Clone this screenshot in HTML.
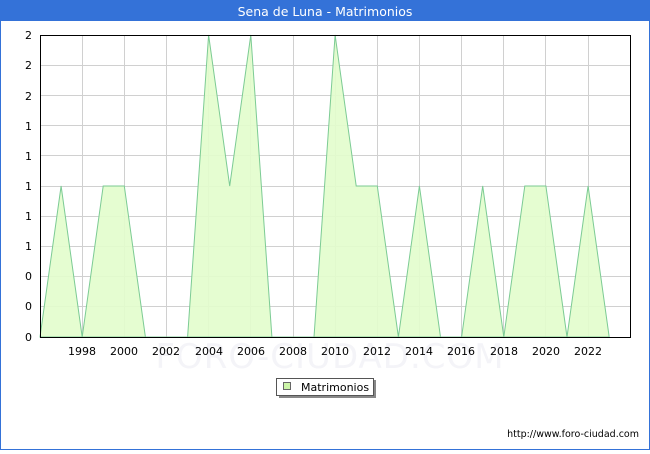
<!DOCTYPE html>
<html><head><style>
body{margin:0;width:650px;height:450px;overflow:hidden;background:#fff;font-family:"DejaVu Sans","Liberation Sans",sans-serif;}
</style></head><body>
<svg width="650" height="450" viewBox="0 0 650 450" xmlns="http://www.w3.org/2000/svg" font-family="DejaVu Sans, Liberation Sans, sans-serif">
<rect x="0" y="0" width="650" height="450" fill="#3472d8"/>
<rect x="1" y="21" width="648" height="428" fill="#fff"/>
<text x="325" y="16" fill="#fff" font-size="12.5" text-anchor="middle">Sena de Luna - Matrimonios</text>
<text x="330" y="368" fill="#f4f4f8" font-size="34" text-anchor="middle" letter-spacing="1">FORO-CIUDAD.COM</text>
<g stroke="#d0d0d0" stroke-width="1">
<line x1="40" y1="65.5" x2="630" y2="65.5"/><line x1="40" y1="95.5" x2="630" y2="95.5"/><line x1="40" y1="125.5" x2="630" y2="125.5"/><line x1="40" y1="155.5" x2="630" y2="155.5"/><line x1="40" y1="186.5" x2="630" y2="186.5"/><line x1="40" y1="216.5" x2="630" y2="216.5"/><line x1="40" y1="246.5" x2="630" y2="246.5"/><line x1="40" y1="276.5" x2="630" y2="276.5"/><line x1="40" y1="306.5" x2="630" y2="306.5"/>
<line x1="82.5" y1="35" x2="82.5" y2="337"/><line x1="124.5" y1="35" x2="124.5" y2="337"/><line x1="166.5" y1="35" x2="166.5" y2="337"/><line x1="208.5" y1="35" x2="208.5" y2="337"/><line x1="250.5" y1="35" x2="250.5" y2="337"/><line x1="293.5" y1="35" x2="293.5" y2="337"/><line x1="335.5" y1="35" x2="335.5" y2="337"/><line x1="377.5" y1="35" x2="377.5" y2="337"/><line x1="419.5" y1="35" x2="419.5" y2="337"/><line x1="461.5" y1="35" x2="461.5" y2="337"/><line x1="503.5" y1="35" x2="503.5" y2="337"/><line x1="545.5" y1="35" x2="545.5" y2="337"/><line x1="588.5" y1="35" x2="588.5" y2="337"/>
</g>
<polygon fill="#e2fdcc" fill-opacity="0.9" stroke="#7ccb94" stroke-width="1" points="40,337 61.1,186 82.2,337 103.2,186 124.3,186 145.4,337 166.5,337 187.6,337 208.6,35 229.7,186 250.8,35 271.9,337 293,337 314,337 335.1,35 356.2,186 377.3,186 398.4,337 419.4,186 440.5,337 461.6,337 482.7,186 503.8,337 524.8,186 545.9,186 567,337 588.1,186 609.2,337"/>
<rect x="40.5" y="35.5" width="590" height="302" fill="none" stroke="#000" stroke-width="1"/>
<g font-size="11" fill="#000" text-anchor="end">
<text x="32" y="39">2</text><text x="32" y="69">2</text><text x="32" y="100">2</text><text x="32" y="130">1</text><text x="32" y="160">1</text><text x="32" y="190">1</text><text x="32" y="220">1</text><text x="32" y="250">1</text><text x="32" y="280">0</text><text x="32" y="310">0</text><text x="32" y="341">0</text>
</g>
<g font-size="11" fill="#000" text-anchor="middle">
<text x="82" y="355">1998</text><text x="124" y="355">2000</text><text x="166" y="355">2002</text><text x="209" y="355">2004</text><text x="251" y="355">2006</text><text x="293" y="355">2008</text><text x="335" y="355">2010</text><text x="377" y="355">2012</text><text x="419" y="355">2014</text><text x="461" y="355">2016</text><text x="504" y="355">2018</text><text x="546" y="355">2020</text><text x="588" y="355">2022</text>
</g>
<rect x="279" y="380" width="97" height="18" fill="#888"/>
<rect x="276.5" y="378.5" width="97" height="17" fill="#fff" stroke="#555"/>
<rect x="283.5" y="382.5" width="7" height="7" fill="#ccf5a8" stroke="#666"/>
<text x="301" y="391" font-size="11" fill="#000">Matrimonios</text>
<text x="639" y="437" font-size="9.5" fill="#000" text-anchor="end">http://www.foro-ciudad.com</text>
</svg>
</body></html>
